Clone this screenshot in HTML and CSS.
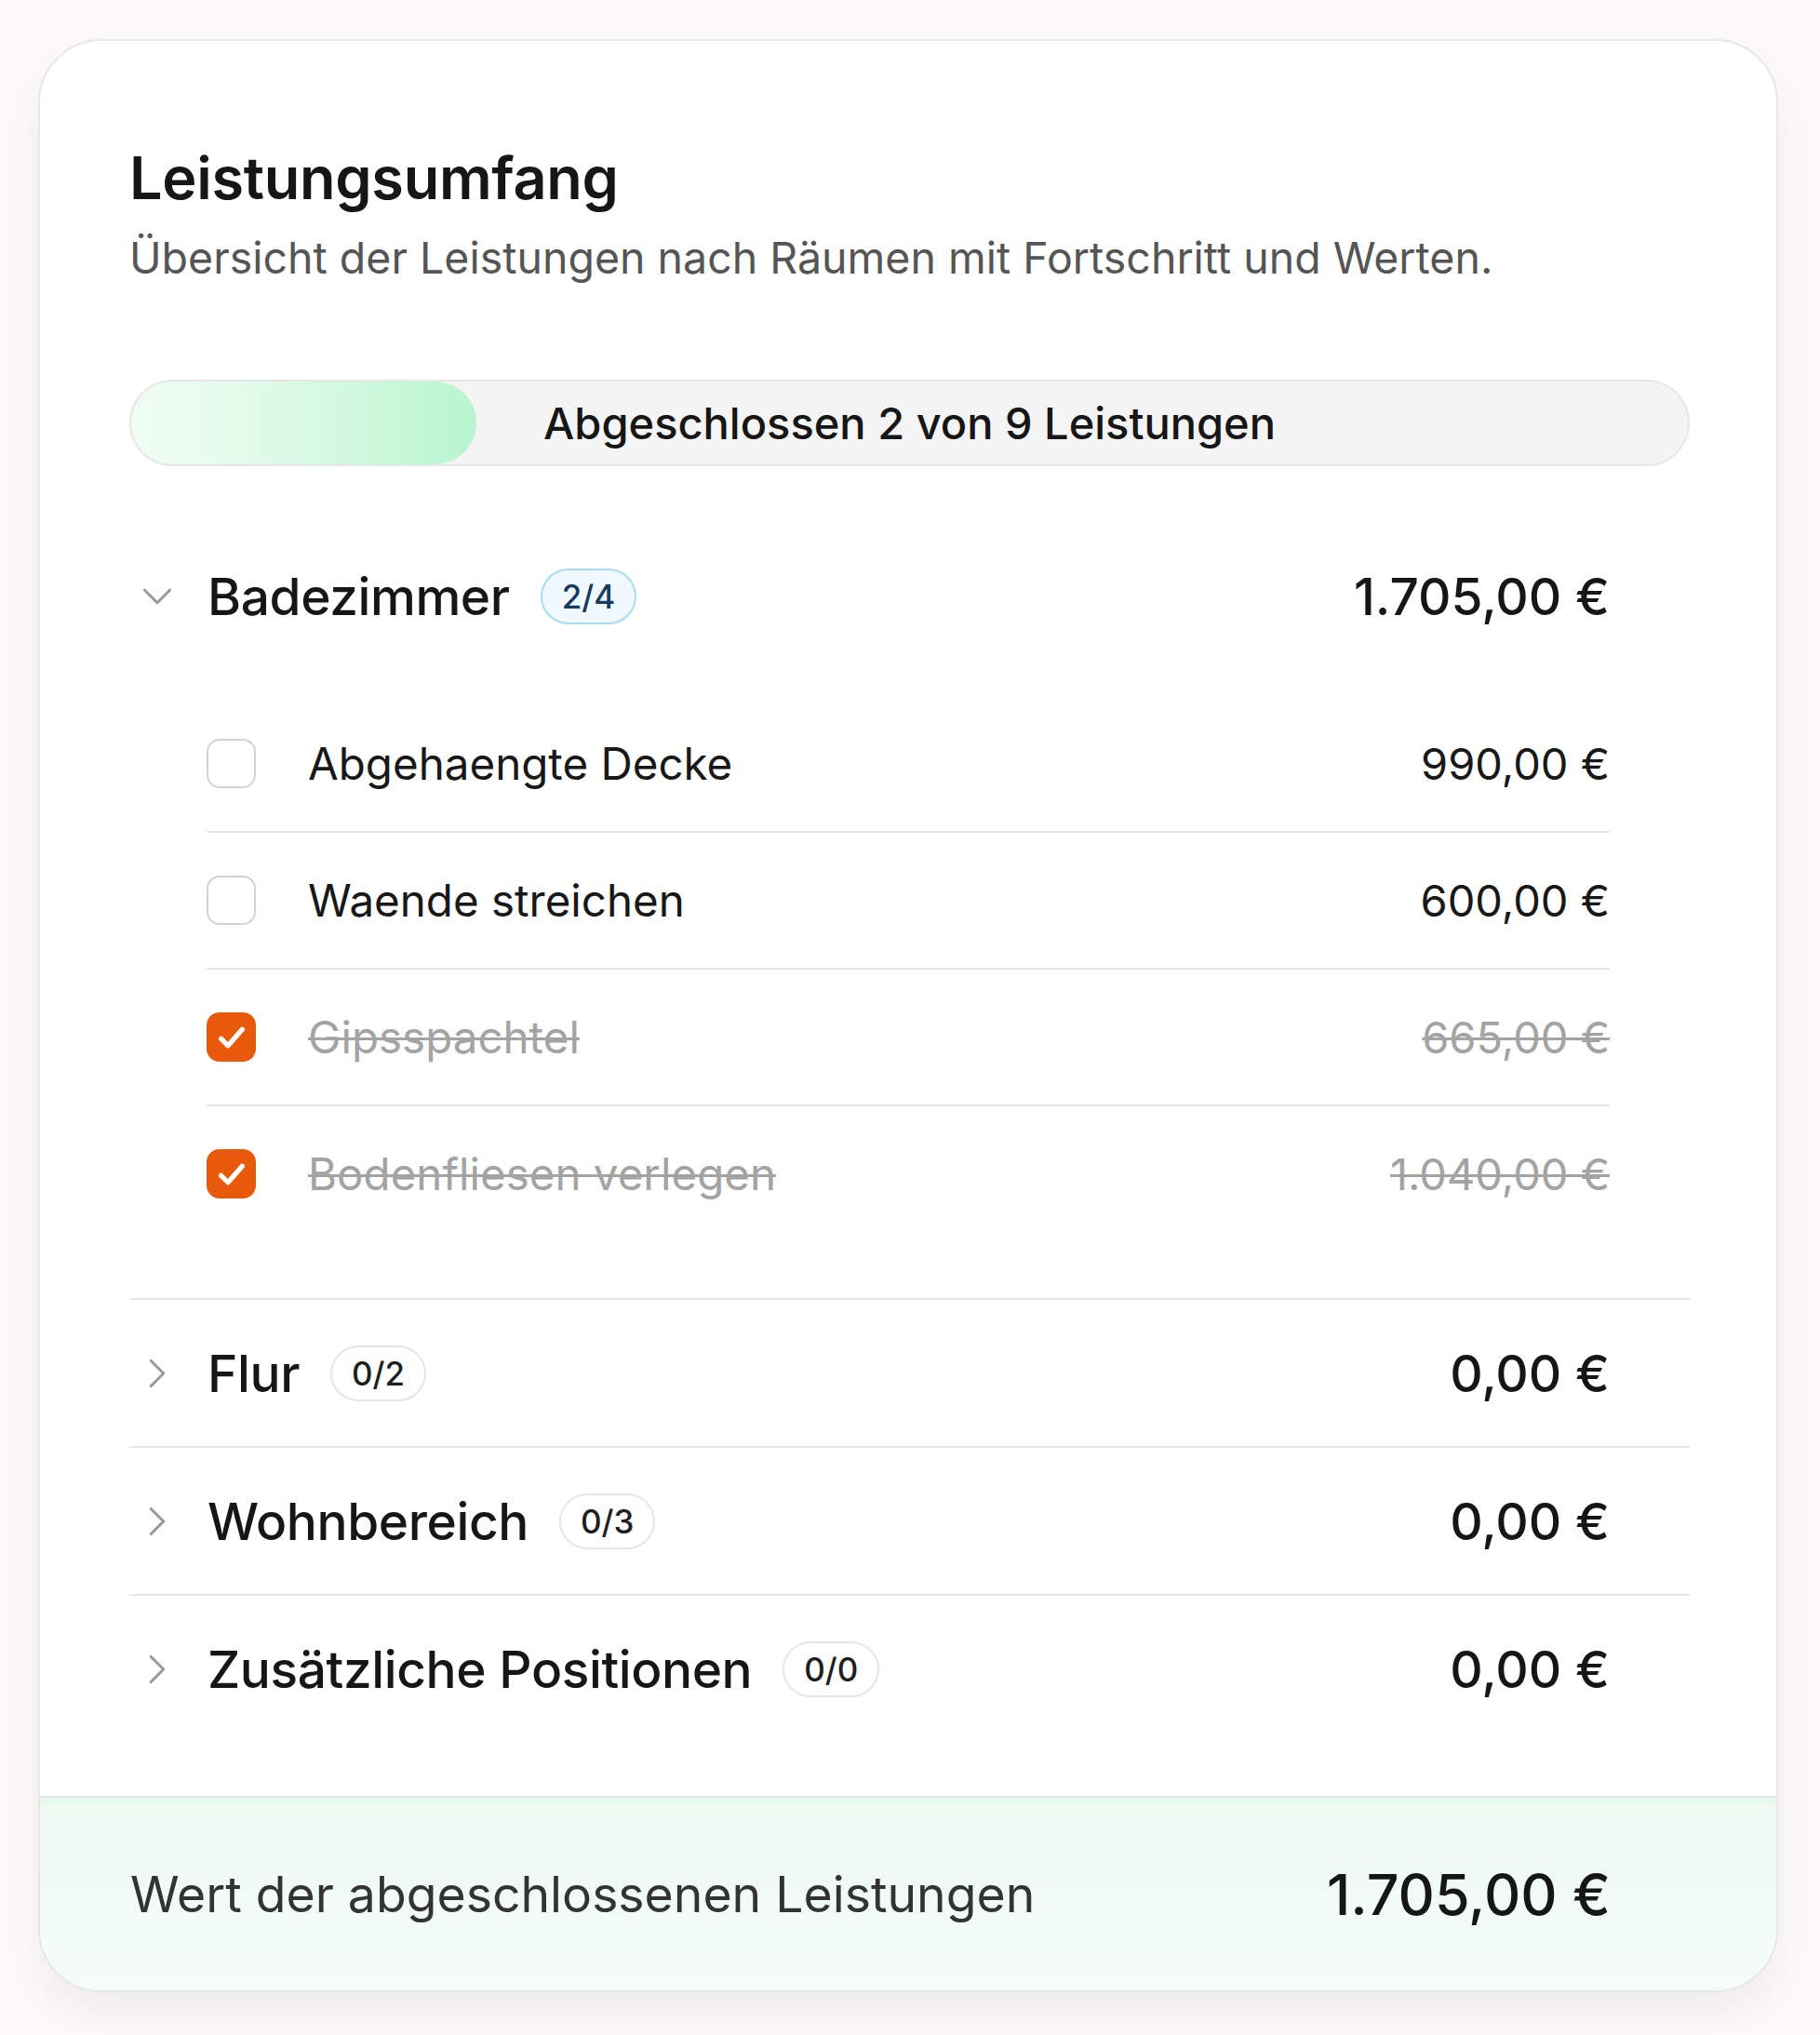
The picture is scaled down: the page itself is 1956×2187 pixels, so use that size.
FILE: index.html
```html
<!DOCTYPE html>
<html lang="de">
<head>
<meta charset="utf-8">
<title>Leistungsumfang</title>
<link rel="stylesheet" href="styles.css">
</head>
<body>
<div class="page">
  <section class="card">
    <div class="card-body">
      <h1 class="title">Leistungsumfang</h1>
      <p class="subtitle">Übersicht der Leistungen nach Räumen mit Fortschritt und Werten.</p>

      <div class="progress">
        <div class="progress-fill" style="width:22.2%"></div>
        <span class="progress-label">Abgeschlossen 2 von 9 Leistungen</span>
      </div>

      <div class="rooms">
        <div class="room">
          <div class="room-head">
            <span class="chev">
              <svg viewBox="0 0 24 24" width="54" height="54"><path d="M6 9l6 6 6-6" fill="none" stroke="#9a9a9a" stroke-width="1.4" stroke-linecap="round" stroke-linejoin="round"/></svg>
            </span>
            <span class="room-name">Badezimmer</span>
            <span class="badge badge-blue">2/4</span>
            <span class="room-amount">1.705,00 €</span>
          </div>
          <ul class="items">
            <li class="item">
              <span class="check"></span>
              <span class="item-name">Abgehaengte Decke</span>
              <span class="item-amount">990,00 €</span>
            </li>
            <li class="item">
              <span class="check"></span>
              <span class="item-name">Waende streichen</span>
              <span class="item-amount">600,00 €</span>
            </li>
            <li class="item done">
              <span class="check checked"><svg viewBox="0 0 24 24" width="42" height="42"><path d="M5.5 12.8l4.2 4.2L18.5 7" fill="none" stroke="#fff" stroke-width="3" stroke-linecap="round" stroke-linejoin="round"/></svg></span>
              <span class="item-name">Gipsspachtel</span>
              <span class="item-amount">665,00 €</span>
            </li>
            <li class="item done">
              <span class="check checked"><svg viewBox="0 0 24 24" width="42" height="42"><path d="M5.5 12.8l4.2 4.2L18.5 7" fill="none" stroke="#fff" stroke-width="3" stroke-linecap="round" stroke-linejoin="round"/></svg></span>
              <span class="item-name">Bodenfliesen verlegen</span>
              <span class="item-amount">1.040,00 €</span>
            </li>
          </ul>
        </div>

        <div class="room">
          <div class="room-head">
            <span class="chev">
              <svg viewBox="0 0 24 24" width="54" height="54"><path d="M9 6l6 6-6 6" fill="none" stroke="#9a9a9a" stroke-width="1.4" stroke-linecap="round" stroke-linejoin="round"/></svg>
            </span>
            <span class="room-name">Flur</span>
            <span class="badge">0/2</span>
            <span class="room-amount">0,00 €</span>
          </div>
        </div>

        <div class="room">
          <div class="room-head">
            <span class="chev">
              <svg viewBox="0 0 24 24" width="54" height="54"><path d="M9 6l6 6-6 6" fill="none" stroke="#9a9a9a" stroke-width="1.4" stroke-linecap="round" stroke-linejoin="round"/></svg>
            </span>
            <span class="room-name">Wohnbereich</span>
            <span class="badge">0/3</span>
            <span class="room-amount">0,00 €</span>
          </div>
        </div>

        <div class="room">
          <div class="room-head">
            <span class="chev">
              <svg viewBox="0 0 24 24" width="54" height="54"><path d="M9 6l6 6-6 6" fill="none" stroke="#9a9a9a" stroke-width="1.4" stroke-linecap="round" stroke-linejoin="round"/></svg>
            </span>
            <span class="room-name">Zusätzliche Positionen</span>
            <span class="badge">0/0</span>
            <span class="room-amount">0,00 €</span>
          </div>
        </div>
      </div>
    </div>

    <div class="card-footer">
      <span class="footer-label">Wert der abgeschlossenen Leistungen</span>
      <span class="footer-amount">1.705,00 €</span>
    </div>
  </section>
</div>
</body>
</html>
```

FILE: styles.css
```css
* { box-sizing: border-box; }

html, body {
  margin: 0;
  padding: 0;
}

body {
  background: #fbfaf8;
  font-family: Inter, "Noto Sans", "Liberation Sans", sans-serif;
  color: #171717;
}

.page {
  padding: 42px 45px 44px 41px;
}

.card {
  background: #ffffff;
  border: 2px solid #e7e7e7;
  border-radius: 68px;
  overflow: hidden;
  box-shadow: 0 24px 40px rgba(0, 0, 0, 0.05);
}

.card-body {
  padding: 110px 93px 0 96px;
}

.title {
  margin: 0;
  font-size: 63px;
  line-height: 74px;
  font-weight: 600;
  letter-spacing: -0.3px;
  color: #161616;
}

.subtitle {
  margin: 18px 0 0;
  font-size: 46.5px;
  line-height: 62px;
  font-weight: 400;
  color: #555555;
}

.progress {
  margin-top: 100px;
  height: 93px;
  border: 2px solid #e7e7e7;
  border-radius: 999px;
  background: #f4f4f4;
  display: grid;
  grid-template-areas: "stack";
  align-items: center;
  overflow: hidden;
}

.progress-fill {
  grid-area: stack;
  height: 100%;
  border-radius: 999px;
  background: linear-gradient(90deg, #f0fdf4 0%, #dcfae6 45%, #b8f5cf 100%);
}

.progress-label {
  grid-area: stack;
  justify-self: center;
  font-size: 47px;
  font-weight: 500;
  color: #161616;
}

.rooms {
  margin-top: 61px;
  padding-bottom: 58px;
}

.room {
  border-bottom: 2px solid #e8e8e8;
}

.room:last-child {
  border-bottom: none;
}

.room-head {
  height: 157px;
  display: flex;
  align-items: center;
  padding-right: 86px;
}

.chev {
  width: 60px;
  margin-right: 24px;
  display: flex;
  justify-content: center;
  align-items: center;
}

.chev svg { display: block; }

.room-name {
  font-size: 55px;
  font-weight: 500;
  letter-spacing: -0.4px;
  color: #161616;
}

.badge {
  margin-left: 33px;
  height: 60px;
  padding: 0 21px;
  border: 2px solid #e6e6e6;
  border-radius: 999px;
  background: #ffffff;
  display: inline-flex;
  align-items: center;
  font-size: 35px;
  font-weight: 500;
  color: #1f1f1f;
}

.badge-blue {
  border-color: #a9dbf5;
  background: #f0f9fe;
  color: #173a5e;
}

.room-amount {
  margin-left: auto;
  font-size: 55px;
  font-weight: 500;
  color: #161616;
}

.items {
  list-style: none;
  margin: 29px 0 0;
  padding: 0 86px 61px 83px;
}

.item {
  height: 147px;
  display: flex;
  align-items: center;
  border-bottom: 2px solid #e6e6e6;
}

.item:last-child {
  border-bottom: none;
  height: 145px;
}

.check {
  width: 53px;
  height: 53px;
  flex: none;
  border: 2.5px solid #d4d4d4;
  border-radius: 14px;
  background: #ffffff;
  margin-right: 56px;
  display: flex;
  align-items: center;
  justify-content: center;
}

.check.checked {
  border: none;
  background: #e8590c;
}

.check svg { display: block; }

.item-name {
  font-size: 47.5px;
  font-weight: 400;
  color: #181818;
}

.item-amount {
  margin-left: auto;
  font-size: 47px;
  font-weight: 400;
  color: #181818;
}

.item.done .item-name,
.item.done .item-amount {
  color: #a3a3a3;
  text-decoration: line-through;
  text-decoration-thickness: 3px;
}

.card-footer {
  border-top: 2px solid #e3e6e4;
  height: 209px;
  display: flex;
  align-items: center;
  padding: 0 178px 0 97px;
  background: linear-gradient(180deg, #e4f8ea 0px, #eefaf2 10px, #f2fbf6 60%, #f6fdf9 100%);
}

.footer-label {
  font-size: 53.5px;
  font-weight: 400;
  color: #333333;
}

.footer-amount {
  margin-left: auto;
  font-size: 61px;
  font-weight: 500;
  color: #161616;
}
```
